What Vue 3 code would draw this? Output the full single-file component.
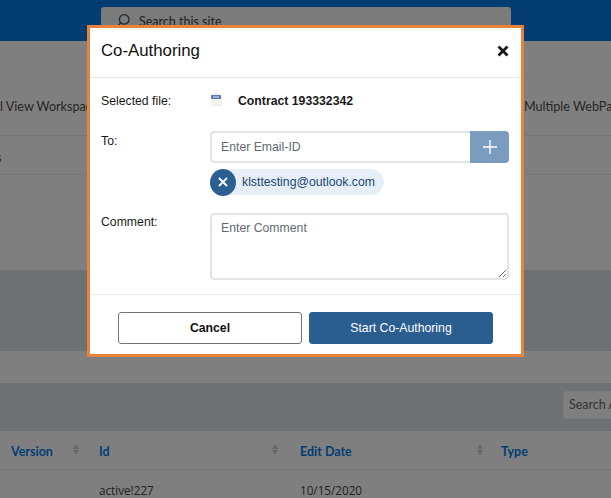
<script setup>
const columns = [
  { name: 'Version', width: '99px', pad: '11px', sortPad: '20px' },
  { name: 'Id', width: '201px', pad: '0', sortPad: '22px' },
  { name: 'Edit Date', width: '201px', pad: '0', sortPad: '18px' },
  { name: 'Type', width: '110px', pad: '0', sortPad: '0' }
]
</script>

<template>
  <div class="page">
    <header class="topbar">
      <div class="site-search">
        <svg viewBox="0 0 20 20" width="16" height="16" class="search-glyph">
          <circle cx="11.5" cy="8" r="6" fill="none" stroke="#1d2b38" stroke-width="1.6" />
          <path d="M7 12.5 2 18" stroke="#1d2b38" stroke-width="1.6" fill="none" />
        </svg>
        <span>Search this site</span>
      </div>
    </header>

    <nav class="tabs">
      <span>l View Workspace</span>
      <span class="tabs-right">Multiple WebParts</span>
    </nav>
    <div class="sub-row"><span>s</span></div>
    <div class="blank"></div>
    <div class="band band-one"></div>
    <div class="gap"></div>
    <div class="band band-two">
      <div class="table-search">Search A</div>
    </div>
    <div class="table-head">
      <div
        v-for="col in columns"
        :key="col.name"
        class="th"
        :style="{ width: col.width, paddingLeft: col.pad, paddingRight: col.sortPad }"
      >
        <span>{{ col.name }}</span>
        <span v-if="col.name !== 'Type'" class="sort">
          <i class="up"></i>
          <i class="down"></i>
        </span>
      </div>
    </div>
    <div class="table-row">
      <div class="td" style="width: 99px"></div>
      <div class="td" style="width: 201px">active!227</div>
      <div class="td" style="width: 201px">10/15/2020</div>
    </div>

    <div class="modal">
      <div class="modal-header">
        <h2>Co-Authoring</h2>
        <svg viewBox="0 0 12 12" width="12" height="12" class="close">
          <path d="M1.5 1.5 10.5 10.5M10.5 1.5 1.5 10.5" stroke="#1a1a1a" stroke-width="2.8" />
        </svg>
      </div>

      <div class="modal-body">
        <div class="form-row file-row">
          <label>Selected file:</label>
          <div class="file">
            <svg viewBox="0 0 13 13" width="13" height="13" class="file-icon">
              <path d="M2 0.5h7l2.5 2.5v9.5H2z" fill="#f4f3ec" stroke="#e6e6e0" stroke-width="0.6" />
              <rect x="1" y="2" width="10" height="4" rx="0.8" fill="#5874b0" />
              <path d="M3 4h6" stroke="#dfe6f4" stroke-width="1" />
            </svg>
            <strong>Contract 193332342</strong>
          </div>
        </div>

        <div class="form-row to-row">
          <label>To:</label>
          <div class="field">
            <div class="email-group">
              <input type="text" placeholder="Enter Email-ID" />
              <button class="add" type="button">
                <svg viewBox="0 0 16 16" width="16" height="16">
                  <path d="M8 1v14M1 8h14" stroke="#fff" stroke-width="1.4" />
                </svg>
              </button>
            </div>
            <div class="chip">
              <span class="chip-x">
                <svg viewBox="0 0 10 10" width="10" height="10">
                  <path d="M1 1 9 9M9 1 1 9" stroke="#fff" stroke-width="1.8" />
                </svg>
              </span>
              <span class="chip-text">klsttesting@outlook.com</span>
            </div>
          </div>
        </div>

        <div class="form-row comment-row">
          <label>Comment:</label>
          <textarea placeholder="Enter Comment"></textarea>
        </div>
      </div>

      <div class="modal-footer">
        <button class="btn cancel" type="button">Cancel</button>
        <button class="btn start" type="button">Start Co-Authoring</button>
      </div>
    </div>
  </div>
</template>

<style>
html,
body {
  margin: 0;
  overflow: hidden;
}
</style>

<style scoped>
.page {
  position: relative;
  width: 611px;
  height: 498px;
  overflow: hidden;
  background: #7f7f7f;
  font-family: Lato, "Open Sans", sans-serif;
  color: #1f1f1f;
}

.topbar {
  height: 41px;
  background: #033d72;
  padding: 7px 0 0 101px;
  box-sizing: border-box;
}

.site-search {
  width: 410px;
  height: 34px;
  background: #7b7b7b;
  border-radius: 3px 3px 0 0;
  display: flex;
  align-items: flex-start;
  padding: 6px 0 0 14px;
  box-sizing: border-box;
  gap: 8px;
  font-size: 12.5px;
  color: #222;
}

.search-glyph {
  flex: none;
}

.site-search span {
  line-height: 18px;
}

.tabs {
  height: 95px;
  box-sizing: border-box;
  border-bottom: 1px solid #767676;
  display: flex;
  justify-content: space-between;
  padding-top: 57px;
  font-size: 12.6px;
  line-height: 18px;
  color: #262626;
  white-space: nowrap;
}

.tabs-right {
  margin-right: -16px;
}

.sub-row {
  height: 39px;
  box-sizing: border-box;
  border-bottom: 1px solid #777;
  font-size: 12.6px;
  line-height: 18px;
  padding-top: 13px;
  margin-left: -4px;
}

.blank {
  height: 95px;
}

.band {
  background: #6f7274;
}

.band-one {
  height: 81px;
}

.gap {
  height: 32px;
}

.band-two {
  height: 48px;
  position: relative;
}

.table-search {
  position: absolute;
  left: 563px;
  top: 8px;
  width: 60px;
  height: 26px;
  background: #7f7f7f;
  border: 1px solid #7a7a7a;
  border-radius: 3px;
  font-size: 12.5px;
  line-height: 26px;
  padding-left: 5px;
  color: #333;
  white-space: nowrap;
}

.table-head {
  height: 39px;
  box-sizing: border-box;
  border-bottom: 1px solid #767676;
  display: flex;
}

.th {
  display: flex;
  align-items: center;
  justify-content: space-between;
  box-sizing: border-box;
  padding-top: 2px;
  font-size: 12.5px;
  font-weight: 700;
  color: #033d72;
}

.sort {
  display: flex;
  flex-direction: column;
  gap: 1px;
  margin-top: -3px;
}

.sort i {
  display: block;
  width: 0;
  height: 0;
  border-left: 3.5px solid transparent;
  border-right: 3.5px solid transparent;
}

.sort .up {
  border-bottom: 5px solid #676767;
}

.sort .down {
  border-top: 5px solid #676767;
}

.table-row {
  display: flex;
  font-family: "Open Sans", sans-serif;
  font-size: 11.7px;
  padding-top: 12px;
  line-height: 16px;
  color: #222;
}

.td {
  box-sizing: border-box;
}

.modal {
  position: absolute;
  left: 87px;
  top: 25px;
  width: 437px;
  height: 332px;
  box-sizing: border-box;
  border: 3px solid #e8833a;
  background: #fff;
  font-family: "Liberation Sans", Arial, sans-serif;
  color: #1a1a1a;
  display: flex;
  flex-direction: column;
}

.modal-header {
  height: 50px;
  box-sizing: border-box;
  border-bottom: 1px solid #e6e6e6;
  display: flex;
  align-items: center;
  justify-content: space-between;
  padding: 0 12px 4px 11px;
}

.modal-header h2 {
  margin: 0;
  font-size: 16.8px;
  font-weight: 400;
  color: #111;
}

.modal-body {
  flex: 1;
  padding: 0 12px 0 11px;
  border-bottom: 1px solid #ececec;
}

.form-row {
  display: flex;
}

.form-row label {
  width: 109px;
  flex: none;
  font-size: 12.25px;
  line-height: 16px;
}

.file-row {
  padding-top: 15px;
  height: 38px;
}

.file {
  display: flex;
  align-items: flex-start;
  gap: 15px;
  font-size: 12.25px;
  line-height: 16px;
}

.to-row label {
  padding-top: 2px;
}

.field {
  width: 299px;
}

.email-group {
  display: flex;
  height: 32px;
}

.email-group input {
  flex: 1;
  min-width: 0;
  box-sizing: border-box;
  border: 2px solid #e3e4e8;
  border-right: 0;
  border-radius: 4px 0 0 4px;
  padding: 0 9px;
  font: 12.25px "Liberation Sans", Arial, sans-serif;
  outline: none;
}

.email-group input::placeholder,
textarea::placeholder {
  color: #626a72;
  opacity: 1;
}

.add {
  width: 39px;
  border: 0;
  padding: 0;
  background: #7a9cbf;
  border-radius: 0 4px 4px 0;
  display: flex;
  align-items: center;
  justify-content: center;
}

.chip {
  display: inline-flex;
  align-items: center;
  height: 26px;
  margin-top: 6px;
  background: #e6eff8;
  border-radius: 13px;
  padding-right: 9px;
  vertical-align: top;
}

.chip-x {
  width: 26px;
  height: 27px;
  border-radius: 50%;
  background: #2c5f91;
  display: flex;
  align-items: center;
  justify-content: center;
}

.chip-text {
  margin-left: 6px;
  font-size: 12.25px;
  color: #1c4672;
}

.comment-row {
  margin-top: 18px;
}

.comment-row label {
  padding-top: 1px;
}

.comment-row textarea {
  width: 299px;
  height: 67px;
  box-sizing: border-box;
  border: 2px solid #e3e4e8;
  border-radius: 4px;
  padding: 5px 9px;
  font: 12.25px/16px "Liberation Sans", Arial, sans-serif;
  outline: none;
}

.modal-footer {
  height: 59px;
  box-sizing: border-box;
  display: flex;
  justify-content: center;
  gap: 7px;
  padding: 17px 0 0;
}

.btn {
  width: 184px;
  height: 32px;
  box-sizing: border-box;
  border-radius: 3px;
  font: 12.25px "Liberation Sans", Arial, sans-serif;
}

.cancel {
  background: #fff;
  border: 1px solid #70747a;
  font-weight: 700;
  color: #111;
}

.start {
  background: #2a5d90;
  border: 1px solid #2a5d90;
  color: #fff;
}

.close {
  display: block;
}
</style>
